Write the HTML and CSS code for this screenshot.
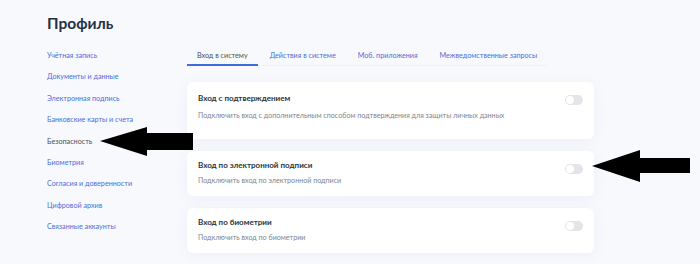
FILE: index.html
```html
<!DOCTYPE html>
<html lang="ru">
<head>
  <meta charset="UTF-8">
  <title>Профиль</title>
  <link rel="stylesheet" href="styles.css">
</head>
<body>
  <div class="page">
    <h1 class="title">Профиль</h1>

    <div class="layout">
      <!-- меню слева -->
      <nav class="sidebar">
        <a class="side-link">Учётная запись</a>
        <a class="side-link">Документы и данные</a>
        <a class="side-link">Электронная подпись</a>
        <a class="side-link">Банковские карты и счета</a>
        <a class="side-link active">Безопасность</a>
        <a class="side-link">Биометрия</a>
        <a class="side-link">Согласия и доверенности</a>
        <a class="side-link">Цифровой архив</a>
        <a class="side-link">Связанные аккаунты</a>
      </nav>

      <main class="content">
        <div class="tabs">
          <span class="tab active">Вход в систему</span>
          <span class="tab">Действия в системе</span>
          <span class="tab">Моб. приложения</span>
          <span class="tab">Межведомственные запросы</span>
        </div>

        <div class="card card-tall">
          <div class="card-text">
            <div class="card-title">Вход с подтверждением</div>
            <div class="card-sub">Подключить вход с дополнительным способом подтверждения для защиты личных данных</div>
          </div>
          <span class="toggle"></span>
        </div>

        <div class="card">
          <div class="card-text">
            <div class="card-title">Вход по электронной подписи</div>
            <div class="card-sub">Подключить вход по электронной подписи</div>
          </div>
          <span class="toggle"></span>
        </div>

        <div class="card">
          <div class="card-text">
            <div class="card-title">Вход по биометрии</div>
            <div class="card-sub">Подключить вход по биометрии</div>
          </div>
          <span class="toggle"></span>
        </div>
      </main>
    </div>
  </div>

  <!-- стрелки поверх страницы -->
  <svg class="arrow arrow-left" width="94" height="30" viewBox="0 0 94 30">
    <polygon points="0,14 47,0 47,6 93,6 93,23 47,23 47,29" fill="#000"/>
  </svg>
  <svg class="arrow arrow-right" width="99" height="33" viewBox="0 0 99 33">
    <polygon points="0,16 48,0 48,8 98,8 98,23 48,23 48,32" fill="#000"/>
  </svg>
</body>
</html>
```

FILE: styles.css
```css
html, body {
  margin: 0;
  padding: 0;
  width: 700px;
  height: 264px;
  overflow: hidden;
  background: #f8f9fd;
  font-family: Lato, "Noto Sans", sans-serif;
  color: #0b1f33;
}

.page {
  padding: 13px 0 0 47px;
}

/* заголовок */
.title {
  margin: 0;
  font-size: 15.5px;
  line-height: 20px;
  font-weight: 700;
  color: #233043;
}

.layout {
  display: flex;
  margin-top: 18px;
}

/* боковое меню */
.sidebar {
  width: 140px;
  display: flex;
  flex-direction: column;
  gap: 11.4px;
}

.side-link {
  font-size: 7.2px;
  line-height: 10px;
  color: #4b6edb;
  white-space: nowrap;
}

.side-link.active {
  color: #4a4f57;
}

.content {
  width: 407px;
}

/* вкладки */
.tabs {
  display: flex;
  width: 360px;
  border-bottom: 1px solid #eef1f6;
  margin-bottom: 16px;
}

.tab {
  padding: 0 10px 3px;
  font-size: 7.2px;
  line-height: 10px;
  color: #4b6edb;
  white-space: nowrap;
  margin-right: 2px;
}

.tab.active {
  color: #4a4f57;
  border-bottom: 2px solid #3f6ae2;
  margin-bottom: -1px;
}

/* карточки */
.card {
  display: flex;
  align-items: flex-start;
  justify-content: space-between;
  background: #fff;
  border-radius: 6px;
  padding: 0 11px;
  height: 45px;
  margin-bottom: 12px;
  box-shadow: 0 2px 14px rgba(90, 115, 170, 0.07);
}

.card-tall {
  height: 57px;
}

.card-text {
  padding-top: 8.5px;
}

.card-tall .card-text {
  padding-top: 10.5px;
}

.card-title {
  font-size: 8px;
  line-height: 11px;
  font-weight: 700;
  color: #2a3340;
}

.card-sub {
  margin-top: 5.5px;
  font-size: 7.15px;
  line-height: 10px;
  color: #7d8591;
}

.card-tall .card-sub {
  margin-top: 7.5px;
}

.toggle {
  position: relative;
  width: 18px;
  height: 10px;
  margin-top: 13px;
  border-radius: 5px;
  background: #e3e5e8;
}

.toggle::after {
  content: "";
  position: absolute;
  left: 1px;
  top: 1px;
  width: 8px;
  height: 8px;
  border-radius: 50%;
  background: #fff;
}

/* стрелки */
.arrow {
  position: absolute;
}

.arrow-left {
  left: 100px;
  top: 127px;
}

.arrow-right {
  left: 592px;
  top: 150px;
}
```
